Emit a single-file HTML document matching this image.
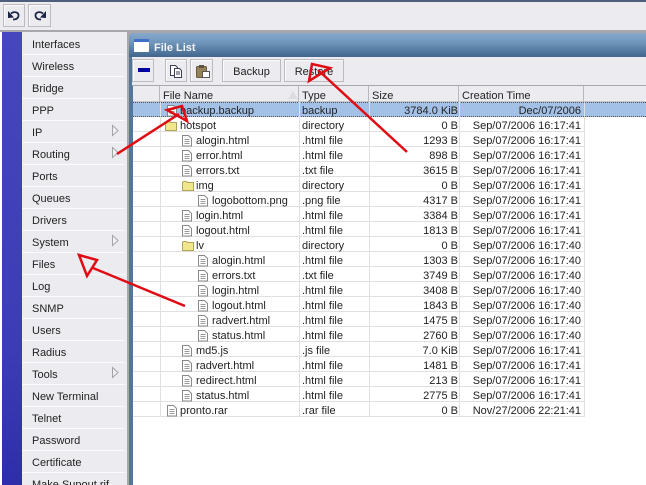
<!DOCTYPE html>
<html style="background:#fff;overflow:hidden"><head><meta charset="utf-8">
<style>
html,body{margin:0;padding:0}
body{width:646px;height:485px;overflow:hidden;position:relative;background:#ecebf0;font-family:"Liberation Sans",sans-serif;font-size:11px;color:#222}
div{position:absolute;box-sizing:border-box}
.btn{background:#ecebf0;border:1px solid #bcbcc0;box-shadow:inset 1px 1px 0 #fbfbfd}
.m{left:22px;width:103px;height:22px;line-height:25px;padding-left:10px;border-bottom:1px solid #fbfbfd;font-size:11px;white-space:nowrap}
.r{left:133px;width:452px;height:15px;border-bottom:1px solid #e0e0e0;line-height:15px;white-space:nowrap}
.r span{position:absolute;top:2px}
.t{left:169px}
.s{right:127px;text-align:right}
.d{right:4px;text-align:right}
.h{top:86px;height:16px;background:#ecebf0;border-right:1px solid #b8b8bc;border-bottom:1px solid #c8c8cc;line-height:21px;padding-left:3px;font-size:11px;white-space:nowrap}
</style></head><body>
<div style="left:0;top:0;width:646px;height:2px;background:#4d5f7c"></div>
<div class="btn" style="left:3px;top:4px;width:22px;height:23px"></div>
<div class="btn" style="left:28px;top:4px;width:23px;height:23px"></div>
<svg style="position:absolute;left:0;top:0" width="60" height="30" fill="none" stroke="#1c2445" stroke-width="1.8"><path d="M11 13.5C14 11 19 12 18.5 16 18 19 15 19.5 13 19.5"/><path d="M8 11V18L14 17.5Z" fill="#1c2445" stroke="none"/><path d="M43 13.5C40 11 35 12 35.500 16 36 19 39 19.500 41 19.500"/><path d="M46 11V18L40 17.500Z" fill="#1c2445" stroke="none"/></svg>
<div style="left:0;top:30px;width:646px;height:2px;background:#a8a8ac"></div>
<div style="left:0;top:32px;width:2px;height:453px;background:#fff"></div>
<div style="left:2px;top:32px;width:20px;height:453px;background:linear-gradient(#4646be,#3c3cb6 70%,#2e2eaa)"></div>
<div class="m" style="top:33px">Interfaces</div>
<div class="m" style="top:55px">Wireless</div>
<div class="m" style="top:77px">Bridge</div>
<div class="m" style="top:99px">PPP</div>
<div class="m" style="top:121px">IP</div>
<div class="m" style="top:143px">Routing</div>
<div class="m" style="top:165px">Ports</div>
<div class="m" style="top:187px">Queues</div>
<div class="m" style="top:209px">Drivers</div>
<div class="m" style="top:231px">System</div>
<div class="m" style="top:253px">Files</div>
<div class="m" style="top:275px">Log</div>
<div class="m" style="top:297px">SNMP</div>
<div class="m" style="top:319px">Users</div>
<div class="m" style="top:341px">Radius</div>
<div class="m" style="top:363px">Tools</div>
<div class="m" style="top:385px">New Terminal</div>
<div class="m" style="top:407px">Telnet</div>
<div class="m" style="top:429px">Password</div>
<div class="m" style="top:451px">Certificate</div>
<div class="m" style="top:473px;border:0">Make Supout.rif</div>
<svg style="position:absolute;left:0;top:0" width="130" height="485" fill="#f2f2f5" stroke="#a4a4a8"><path d="M112.500 125.500L118 130.500 112.500 135.500Z"/><path d="M112.500 147.500L118 152.500 112.500 157.500Z"/><path d="M112.500 235.500L118 240.500 112.500 245.500Z"/><path d="M112.500 367.500L118 372.500 112.500 377.500Z"/></svg>

<div style="left:127px;top:30px;width:519px;height:455px;background:#a8a8ac"></div>
<div style="left:129px;top:33px;width:517px;height:452px;background:#53769b;border-radius:5px 0 0 0"></div>
<div style="left:129px;top:33px;width:517px;height:24px;background:linear-gradient(#86a9cc,#6f95ba 40%,#41668e);border-radius:5px 0 0 0"></div>
<div style="left:134px;top:39px;width:15px;height:13px;background:#fff;border-top:3px solid #3f70c8;border-radius:1px"></div>
<div style="left:154px;top:41px;color:#f2f5f8;font-weight:bold;font-size:11px;line-height:14px">File List</div>
<div style="left:132px;top:57px;width:514px;height:28px;background:#ecebf0"></div>
<div class="btn" style="left:132px;top:59px;width:22px;height:23px"></div>
<div style="left:138px;top:68px;width:12px;height:4px;background:#0000a0"></div>
<div class="btn" style="left:165px;top:59px;width:22px;height:23px"></div>
<div class="btn" style="left:190px;top:59px;width:23px;height:23px"></div>
<svg style="position:absolute;left:165px;top:59px" width="50" height="24" fill="none"><path d="M5.500 6.500h5l2 2v8h-7z" fill="#fff" stroke="#3a3f55"/><path d="M9.500 9.500h5l2 2v7h-7z" fill="#fff" stroke="#3a3f55"/><path d="M11 13h4M11 15h4" stroke="#3a3f55"/><rect x="31.500" y="7.500" width="10" height="11" rx="1" fill="#94825a" stroke="#6a5c3c"/><rect x="34" y="6" width="5" height="3" fill="#5c5440"/><rect x="37.500" y="12.500" width="7" height="6" fill="#fff" stroke="#555"/></svg>
<div class="btn" style="left:222px;top:59px;width:59px;height:23px;text-align:center;line-height:25px">Backup</div>
<div class="btn" style="left:284px;top:59px;width:60px;height:23px;text-align:center;line-height:25px">Restore</div>

<div style="left:133px;top:85px;width:513px;height:400px;background:#fff"></div>
<div style="left:132px;top:85px;width:514px;height:1px;background:#a8a8ac"></div>
<div class="h" style="left:133px;width:27px"></div>
<div class="h" style="left:160px;width:139px">File Name</div>
<div class="h" style="left:299px;width:70px">Type</div>
<div class="h" style="left:369px;width:90px">Size</div>
<div class="h" style="left:459px;width:125px">Creation Time</div>
<div class="h" style="left:584px;width:62px;border-right:0"></div>
<div style="left:288px;top:91px;width:0;height:0;border-left:5px solid transparent;border-right:5px solid transparent;border-bottom:8px solid #dcdce0"></div>

<div style="left:133px;top:102px;width:513px;height:15px;background:#a3c1e6;border-top:1px dotted #555;border-bottom:1px dotted #555"></div>
<div style="left:160px;top:102px;width:1px;height:315px;background:#e0e0e0"></div>
<div style="left:299px;top:102px;width:1px;height:315px;background:#e0e0e0"></div>
<div style="left:369px;top:102px;width:1px;height:315px;background:#e0e0e0"></div>
<div style="left:459px;top:102px;width:1px;height:315px;background:#e0e0e0"></div>
<div style="left:584px;top:102px;width:1px;height:315px;background:#e0e0e0"></div>

<div class="r" style="top:102px;border:0"><span style="left:47px">backup.backup</span><span class="t">backup</span><span class="s">3784.0 KiB</span><span class="d">Dec/07/2006</span></div>
<div class="r" style="top:117px"><span style="left:47px">hotspot</span><span class="t">directory</span><span class="s">0 B</span><span class="d">Sep/07/2006 16:17:41</span></div>
<div class="r" style="top:132px"><span style="left:63px">alogin.html</span><span class="t">.html file</span><span class="s">1293 B</span><span class="d">Sep/07/2006 16:17:41</span></div>
<div class="r" style="top:147px"><span style="left:63px">error.html</span><span class="t">.html file</span><span class="s">898 B</span><span class="d">Sep/07/2006 16:17:41</span></div>
<div class="r" style="top:162px"><span style="left:63px">errors.txt</span><span class="t">.txt file</span><span class="s">3615 B</span><span class="d">Sep/07/2006 16:17:41</span></div>
<div class="r" style="top:177px"><span style="left:63px">img</span><span class="t">directory</span><span class="s">0 B</span><span class="d">Sep/07/2006 16:17:41</span></div>
<div class="r" style="top:192px"><span style="left:79px">logobottom.png</span><span class="t">.png file</span><span class="s">4317 B</span><span class="d">Sep/07/2006 16:17:41</span></div>
<div class="r" style="top:207px"><span style="left:63px">login.html</span><span class="t">.html file</span><span class="s">3384 B</span><span class="d">Sep/07/2006 16:17:41</span></div>
<div class="r" style="top:222px"><span style="left:63px">logout.html</span><span class="t">.html file</span><span class="s">1813 B</span><span class="d">Sep/07/2006 16:17:41</span></div>
<div class="r" style="top:237px"><span style="left:63px">lv</span><span class="t">directory</span><span class="s">0 B</span><span class="d">Sep/07/2006 16:17:40</span></div>
<div class="r" style="top:252px"><span style="left:79px">alogin.html</span><span class="t">.html file</span><span class="s">1303 B</span><span class="d">Sep/07/2006 16:17:40</span></div>
<div class="r" style="top:267px"><span style="left:79px">errors.txt</span><span class="t">.txt file</span><span class="s">3749 B</span><span class="d">Sep/07/2006 16:17:40</span></div>
<div class="r" style="top:282px"><span style="left:79px">login.html</span><span class="t">.html file</span><span class="s">3408 B</span><span class="d">Sep/07/2006 16:17:40</span></div>
<div class="r" style="top:297px"><span style="left:79px">logout.html</span><span class="t">.html file</span><span class="s">1843 B</span><span class="d">Sep/07/2006 16:17:40</span></div>
<div class="r" style="top:312px"><span style="left:79px">radvert.html</span><span class="t">.html file</span><span class="s">1475 B</span><span class="d">Sep/07/2006 16:17:40</span></div>
<div class="r" style="top:327px"><span style="left:79px">status.html</span><span class="t">.html file</span><span class="s">2760 B</span><span class="d">Sep/07/2006 16:17:40</span></div>
<div class="r" style="top:342px"><span style="left:63px">md5.js</span><span class="t">.js file</span><span class="s">7.0 KiB</span><span class="d">Sep/07/2006 16:17:41</span></div>
<div class="r" style="top:357px"><span style="left:63px">radvert.html</span><span class="t">.html file</span><span class="s">1481 B</span><span class="d">Sep/07/2006 16:17:41</span></div>
<div class="r" style="top:372px"><span style="left:63px">redirect.html</span><span class="t">.html file</span><span class="s">213 B</span><span class="d">Sep/07/2006 16:17:41</span></div>
<div class="r" style="top:387px"><span style="left:63px">status.html</span><span class="t">.html file</span><span class="s">2775 B</span><span class="d">Sep/07/2006 16:17:41</span></div>
<div class="r" style="top:402px"><span style="left:47px">pronto.rar</span><span class="t">.rar file</span><span class="s">0 B</span><span class="d">Nov/27/2006 22:21:41</span></div>

<svg style="position:absolute;left:0;top:0" width="646" height="485">
<defs>
<g id="f"><path d="M0.500 0.500h6l3 3v7.500h-9z" fill="#fff" stroke="#888"/><path d="M2.500 4.500h5M2.500 6.500h5M2.500 8.500h5" stroke="#999"/></g>
<g id="d"><path d="M0.500 1.500l1-1h3l1 1h6v8h-11z" fill="#f0e68c" stroke="#b0a458"/></g>
</defs>
<use href="#f" x="167" y="105"/>
<use href="#d" x="165" y="121"/>
<use href="#f" x="182" y="135"/>
<use href="#f" x="182" y="150"/>
<use href="#f" x="182" y="165"/>
<use href="#d" x="182" y="181"/>
<use href="#f" x="198" y="195"/>
<use href="#f" x="182" y="210"/>
<use href="#f" x="182" y="225"/>
<use href="#d" x="182" y="241"/>
<use href="#f" x="198" y="255"/>
<use href="#f" x="198" y="270"/>
<use href="#f" x="198" y="285"/>
<use href="#f" x="198" y="300"/>
<use href="#f" x="198" y="315"/>
<use href="#f" x="198" y="330"/>
<use href="#f" x="182" y="345"/>
<use href="#f" x="182" y="360"/>
<use href="#f" x="182" y="375"/>
<use href="#f" x="182" y="390"/>
<use href="#f" x="167" y="405"/>
<g fill="none" stroke="#e00c14" stroke-width="2.500" stroke-linejoin="miter">
<path d="M117 154L179 114"/>
<path d="M167 110L182 106L187 121Z"/>
<path d="M407 152L318 70"/>
<path d="M309 81L312 64L330 68Z"/>
<path d="M185 306L93 268"/>
<path d="M79 255L97 260L87 276Z"/>
</g>
</svg>
</body></html>
